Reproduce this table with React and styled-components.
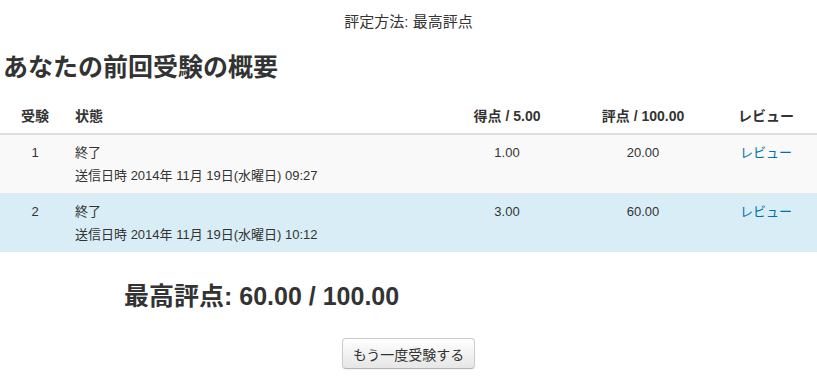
import styled, { createGlobalStyle } from "styled-components";

const GlobalStyle = createGlobalStyle`
    body {
        margin: 0;
        background: #fff;
        color: #333;
        font-family: "Liberation Sans", "Noto Sans CJK JP", sans-serif;
        font-size: 13px;
    }
`;

const Page = styled.div`
    width: 817px;
    height: 378px;
    overflow: hidden;
`;

const GradingMethod = styled.p`
    margin: 0;
    padding-top: 13px;
    text-align: center;
    font-size: 15px;
    line-height: 18px;
`;

const Heading = styled.h2`
    margin: 0;
    padding: 21px 0 0 3px;
    font-size: 25px;
    line-height: 30px;
    font-weight: bold;
`;

const Table = styled.table`
    width: 100%;
    margin-top: 17px;
    border-collapse: collapse;
    table-layout: fixed;
`;

const HeadCell = styled.th`
    box-sizing: border-box;
    width: ${(p) => p.$w}px;
    padding: 8px 5px;
    font-size: 14px;
    line-height: 18px;
    font-weight: bold;
    text-align: ${(p) => p.$align || "center"};
    border-bottom: 2px solid #ddd;
`;

const Row = styled.tr`
    background: ${(p) => (p.$highlight ? "#d9edf7" : "#f9f9f9")};
    border-top: 1px solid #e6e6e6;
`;

const Cell = styled.td`
    box-sizing: border-box;
    padding: 9px 5px 8px;
    line-height: 18px;
    vertical-align: top;
    text-align: ${(p) => p.$align || "center"};
`;

const SubmittedAt = styled.div`
    margin-top: 5px;
`;

const ReviewLink = styled.a`
    color: #0070a8;
    text-decoration: none;
`;

const Feedback = styled.h3`
    margin: 0;
    padding: 29px 0 0 124px;
    font-size: 25px;
    line-height: 30px;
    font-weight: bold;
`;

const Actions = styled.div`
    display: flex;
    justify-content: center;
    padding-top: 27px;
`;

const Button = styled.button`
    width: 133px;
    height: 31px;
    padding: 0;
    font-family: inherit;
    font-size: 14px;
    color: #333;
    background: linear-gradient(#ffffff, #e6e6e6);
    border: 1px solid #ccc;
    border-bottom-color: #b3b3b3;
    border-radius: 4px;
    box-shadow: inset 0 1px 0 rgba(255, 255, 255, 0.2),
        0 1px 2px rgba(0, 0, 0, 0.05);
`;

const attempts = [
    { no: 1, date: "2014年 11月 19日(水曜日) 09:27", grade: "1.00", score: "20.00" },
    { no: 2, date: "2014年 11月 19日(水曜日) 10:12", grade: "3.00", score: "60.00" },
];

export default function App() {
    return (
        <Page>
            <GlobalStyle />
            <GradingMethod>評定方法: 最高評点</GradingMethod>
            <Heading>あなたの前回受験の概要</Heading>
            <Table>
                <thead>
                    <tr>
                        <HeadCell $w={70}>受験</HeadCell>
                        <HeadCell $w={373} $align="left">状態</HeadCell>
                        <HeadCell $w={128}>得点 / 5.00</HeadCell>
                        <HeadCell $w={144}>評点 / 100.00</HeadCell>
                        <HeadCell $w={102}>レビュー</HeadCell>
                    </tr>
                </thead>
                <tbody>
                    {attempts.map((a) => (
                        <Row key={a.no} $highlight={a.no === 2}>
                            <Cell>{a.no}</Cell>
                            <Cell $align="left">
                                終了
                                <SubmittedAt>送信日時 {a.date}</SubmittedAt>
                            </Cell>
                            <Cell>{a.grade}</Cell>
                            <Cell>{a.score}</Cell>
                            <Cell>
                                <ReviewLink href="#">レビュー</ReviewLink>
                            </Cell>
                        </Row>
                    ))}
                </tbody>
            </Table>
            <Feedback>最高評点: 60.00 / 100.00</Feedback>
            <Actions>
                <Button>もう一度受験する</Button>
            </Actions>
        </Page>
    );
}
